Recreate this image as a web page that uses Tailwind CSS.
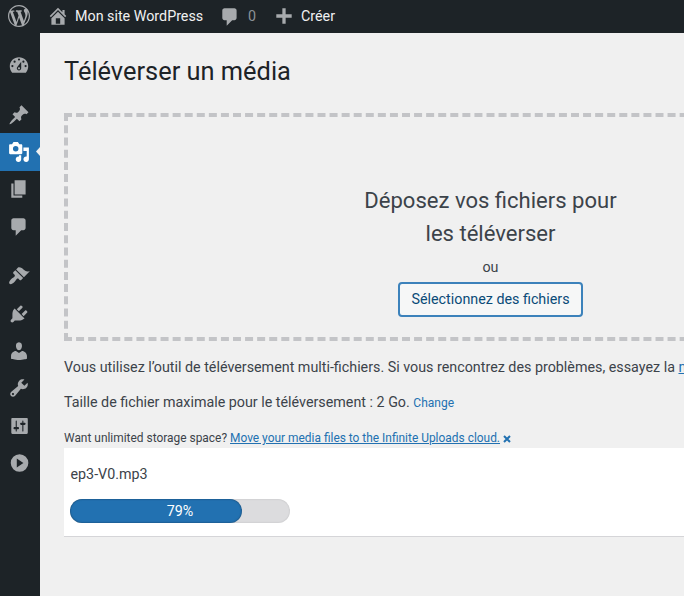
<!DOCTYPE html>
<html lang="fr">
<head>
<meta charset="utf-8">
<title>Téléverser un média</title>
<script src="https://cdn.jsdelivr.net/npm/@tailwindcss/browser@4"></script>
</head>
<body class="w-[684px] h-[596px] overflow-hidden bg-[#f0f0f0] font-[Roboto,sans-serif] text-[14.3px] text-[#3c434a]">
<header class="flex h-[33px] items-center bg-[#1d2327] text-[#f0f0f1] text-[14.3px] leading-[33px]">
  <svg class="ml-[7.500px] mb-[1px] size-[22px] shrink-0 fill-[#a7aaad]" viewBox="0 0 20 20"><path d="M20 10c0-5.51-4.49-10-10-10C4.48 0 0 4.49 0 10c0 5.52 4.48 10 10 10 5.51 0 10-4.48 10-10zM7.78 15.37L4.37 6.22c.55-.02 1.17-.08 1.17-.08.5-.06.44-1.13-.06-1.11 0 0-1.45.11-2.37.11-.18 0-.37 0-.58-.01C4.12 2.69 6.87 1.11 10 1.11c2.33 0 4.45.87 6.05 2.34-.68-.11-1.65.39-1.65 1.58 0 .74.45 1.36.9 2.1.35.61.55 1.36.55 2.46 0 1.49-1.4 5-1.4 5l-3.03-8.37c.54-.02.82-.17.82-.17.5-.05.44-1.25-.06-1.22 0 0-1.44.12-2.38.12-.87 0-2.33-.12-2.33-.12-.5-.03-.56 1.2-.06 1.22l.92.08 1.26 3.41zM17.41 10c.24-.64.74-1.87.43-4.25.7 1.29 1.05 2.71 1.05 4.25 0 3.29-1.73 6.24-4.4 7.78.97-2.59 1.94-5.2 2.92-7.78zM6.1 18.09C3.12 16.65 1.11 13.53 1.11 10c0-1.3.23-2.48.72-3.59C3.25 10.3 4.67 14.2 6.1 18.09zm4.03-6.63l2.58 6.98c-.86.29-1.76.45-2.71.45-.79 0-1.57-.11-2.29-.33.81-2.38 1.62-4.74 2.42-7.1z"/></svg>
  <svg class="ml-[17px] mb-[1px] size-[22px] shrink-0 fill-[#a7aaad]" viewBox="0 0 20 20"><path fill-rule="evenodd" d="M16 8.5l1.53 1.53-1.06 1.06L10 4.6l-6.47 6.5-1.06-1.07L10 2.5l4 4v-2h2v4zm-6-2.46l6 5.99V18H4v-5.97zM12 17v-5H8v5h4z"/></svg>
  <span class="ml-[6.500px] w-[128px] whitespace-nowrap">Mon site WordPress</span>
  <svg class="mt-[1px] ml-[16px] size-[22px] shrink-0 fill-[#a7aaad]" viewBox="0 0 20 20"><path d="M5 2h9c1.1 0 2 .9 2 2v7c0 1.1-.9 2-2 2h-2l-5 5v-5H5c-1.1 0-2-.9-2-2V4c0-1.1.9-2 2-2z"/></svg>
  <span class="ml-[7px] w-[9px] text-[#8c9196]">0</span>
  <svg class="ml-[16px] mb-[1px] size-[22px] shrink-0 fill-[#a7aaad]" viewBox="0 0 20 20"><path d="M17 8.5v3h-5.5V17h-3v-5.500H3v-3h5.500V3h3v5.500z"/></svg>
  <span class="ml-[6px]">Créer</span>
</header>
<div class="flex h-[563px]">
  <nav class="flex w-[40px] shrink-0 flex-col bg-[#1d2327] pt-[13px] fill-[#a7aaad]">
    <div class="flex h-[37.300px] items-center pl-[7.500px]"><svg class="size-[22px]" viewBox="0 0 20 20"><path fill-rule="evenodd" d="M3.760 17h12.480c1.340-1.570 2.140-3.610 2.140-5.840C18.380 6.540 14.630 3 10 3s-8.380 3.540-8.380 8.160c0 2.230.8 4.270 2.140 5.840zM10 4a1 1 0 1 1 0 2 1 1 0 0 1 0-2zM6 6a1 1 0 1 1 0 2 1 1 0 0 1 0-2zm8 0a1 1 0 1 1 0 2 1 1 0 0 1 0-2zm-5.370 5.550L12 7v6c0 1.100-.9 2-2 2s-2-.9-2-2c0-.57.24-1.080.63-1.450zM4 10a1 1 0 1 1 0 2 1 1 0 0 1 0-2zm12 0a1 1 0 1 1 0 2 1 1 0 0 1 0-2zm-5 3a1 1 0 1 0-2 0 1 1 0 0 0 2 0z"/></svg></div>
    <div class="mt-[12.500px] flex h-[37.300px] items-center pl-[7.500px]"><svg class="mt-[1px] size-[22px]" viewBox="0 0 20 20"><path d="M10.440 3.020l1.820-1.820 6.360 6.350-1.830 1.820c-1.050-.68-2.480-.57-3.410.36l-.75.75c-.92.93-1.040 2.350-.35 3.410l-1.830 1.820-2.410-2.410-2.800 2.790c-.42.42-3.380 2.710-3.800 2.290s1.860-3.390 2.280-3.810l2.790-2.790L4.100 9.360l1.830-1.820c1.050.69 2.480.57 3.400-.36l.75-.75c.93-.92 1.050-2.350.36-3.410z"/></svg></div>
    <div class="relative flex h-[37.600px] items-center bg-[#2271b1] fill-white pl-[7.500px]"><svg class="size-[22px]" viewBox="0 0 20 20"><path fill-rule="evenodd" d="M13 11V4c0-.55-.45-1-1-1h-1.670L9 1H5L3.670 3H2c-.55 0-1 .45-1 1v7c0 .55.45 1 1 1h10c.55 0 1-.45 1-1zM7 4.500a2.500 2.500 0 1 1 0 5 2.500 2.500 0 0 1 0-5zM14 6h5v10.500c0 1.380-1.120 2.500-2.500 2.500S14 17.880 14 16.500s1.120-2.500 2.500-2.500c.17 0 .34.02.5.05V9h-3V6zm-4 8.050V13h2v3.500c0 1.380-1.120 2.500-2.500 2.500S7 17.880 7 16.500 8.120 14 9.500 14c.17 0 .34.02.5.05z"/></svg>
      <svg class="absolute right-0 top-[14px] h-[9px] w-[4px] fill-[#f0f0f0]" viewBox="0 0 4 9"><path d="M4 0v9L0 4.500z"/></svg></div>
    <div class="flex h-[37.400px] items-center pl-[7.500px]"><svg class="size-[22px]" viewBox="0 0 20 20"><path d="M6 15V2h10v13H6zm-1 1h8v2H3V5h2v11z"/></svg></div>
    <div class="flex h-[37.400px] items-center pl-[7.500px]"><svg class="size-[22px]" viewBox="0 0 20 20"><path d="M5 2h9c1.100 0 2 .9 2 2v7c0 1.100-.9 2-2 2h-2l-5 5v-5H5c-1.100 0-2-.9-2-2V4c0-1.100.9-2 2-2z"/></svg></div>
    <div class="mt-[12px] flex h-[37.400px] items-center pl-[7.500px]"><svg class="size-[22px]" viewBox="0 0 20 20"><path d="M14.480 11.060L7.410 3.990l1.500-1.500c.5-.56 2.300-.47 3.510.32 1.210.8 1.430 1.280 2.910 2.100 1.180.64 2.450 1.260 4.450.85zm-.71.71L6.700 4.700 4.930 6.470c-.39.39-.39 1.020 0 1.410l1.060 1.060c.39.39.39 1.030 0 1.420-.6.6-1.430 1.110-2.210 1.690-.35.26-.7.53-1.010.84C1.430 14.230.4 16.080 1.400 17.070c.99 1 2.840-.03 4.180-1.360.31-.31.58-.66.85-1.020.57-.78 1.080-1.610 1.690-2.210.39-.39 1.020-.39 1.410 0l1.060 1.060c.39.39 1.020.39 1.410 0z"/></svg></div>
    <div class="flex h-[37.400px] items-center pl-[7.500px]"><svg class="size-[22px]" viewBox="0 0 20 20"><path d="M13.110 4.360L9.870 7.600 8 5.730l3.240-3.240c.35-.34 1.050-.2 1.560.32.52.51.66 1.210.31 1.550zm-8 1.770l.91-1.120 9.010 9.010-1.190.84c-.71.71-2.630 1.160-3.820 1.160H6.140L4.900 17.260c-.59.59-1.540.59-2.120 0-.59-.58-.59-1.530 0-2.120l1.240-1.240v-3.880c0-1.130.4-3.190 1.090-3.890zm7.260 3.970l3.240-3.240c.34-.35 1.040-.21 1.550.31.52.51.66 1.210.31 1.550l-3.240 3.250z"/></svg></div>
    <div class="flex h-[37.400px] items-center pl-[7.500px]"><svg class="size-[22px]" viewBox="0 0 20 20"><path d="M10 9.250c-2.270 0-2.730-3.440-2.730-3.440C7 4.020 7.820 2 9.970 2c2.160 0 2.980 2.020 2.710 3.810 0 0-.41 3.440-2.680 3.440zm0 2.570L12.720 10c2.390 0 4.520 2.330 4.520 4.530v2.490s-3.650 1.130-7.240 1.130c-3.650 0-7.240-1.130-7.240-1.130v-2.490c0-2.250 1.940-4.480 4.470-4.480z"/></svg></div>
    <div class="flex h-[37.400px] items-center pl-[7.500px]"><svg class="size-[22px]" viewBox="0 0 20 20"><path fill-rule="evenodd" d="M16.680 9.770c-1.340 1.340-3.300 1.670-4.950.99l-5.410 6.520c-.99.99-2.590.99-3.580 0s-.99-2.590 0-3.570l6.520-5.420c-.68-1.650-.35-3.610.99-4.950 1.280-1.280 3.120-1.620 4.720-1.060l-2.890 2.890 2.820 2.820 2.860-2.870c.53 1.580.18 3.390-1.080 4.650zM3.810 16.210c.4.39 1.040.39 1.430 0 .4-.4.4-1.040 0-1.430-.39-.4-1.030-.4-1.430 0-.39.39-.39 1.030 0 1.430z"/></svg></div>
    <div class="flex h-[37.400px] items-center pl-[7.500px]"><svg class="size-[22px]" viewBox="0 0 20 20"><path fill-rule="evenodd" d="M18 16V4c0-.8-.3-1.200-1-1.200H4c-.7 0-1 .4-1 1.200v12c0 .8.3 1.200 1 1.200h13c.7 0 1-.4 1-1.200zM8 11h1c.55 0 1 .45 1 1s-.45 1-1 1H8v1.500c0 .28-.22.5-.5.5s-.5-.22-.5-.5V13H6c-.55 0-1-.45-1-1s.45-1 1-1h1V5.500c0-.28.22-.5.5-.5s.5.22.5.5V11zm5-2h-1c-.55 0-1-.45-1-1s.45-1 1-1h1V5.500c0-.28.22-.5.5-.5s.5.22.5.5V7h1c.55 0 1 .45 1 1s-.45 1-1 1h-1v5.500c0 .28-.22.5-.5.5s-.5-.22-.5-.5V9z"/></svg></div>
    <div class="flex h-[37.400px] items-center pl-[7.500px]"><svg class="size-[22px]" viewBox="0 0 20 20"><path fill-rule="evenodd" d="M10.500 2a8 8 0 1 1 0 16 8 8 0 0 1 0-16zM8 6v8l6-4z"/></svg></div>
  </nav>
  <main class="w-[644px] shrink-0 overflow-hidden pl-[24px] pt-[22px]">
    <h1 class="h-[58px] text-[25.400px] leading-[32px] text-[#1d2327]">Téléverser un média</h1>
    <section class="flex h-[228px] w-[853px] flex-col items-center border-4 border-dashed border-[#c3c4c7] pt-[67px]">
      <p class="w-[275px] text-center text-[22.050px] leading-[33px]">Déposez vos fichiers pour les téléverser</p>
      <p class="mt-[6px] leading-[23px]">ou</p>
      <button class="mt-[3px] h-[35px] w-[185px] whitespace-nowrap rounded-[4px] border-2 border-[#3c82bb] bg-[#f6f7f7] pt-[1px] text-[14.300px] text-[#0a4b78]">Sélectionnez des fichiers</button>
    </section>
    <p class="mt-[15px] leading-[22px] whitespace-nowrap">Vous utilisez l’outil de téléversement multi-fichiers. Si vous rencontrez des problèmes, essayez la <a class="text-[#2271b1] underline">m</a></p>
    <p class="mt-[13px] leading-[22px]">Taille de fichier maximale pour le téléversement&nbsp;: 2 Go. <a class="text-[12px] text-[#2271b1]">Change</a></p>
    <p class="mt-[15px] flex h-[19px] items-center text-[11.930px] leading-[19px]">Want unlimited storage space?&nbsp;<a class="text-[#2271b1] underline">Move your media files to the Infinite Uploads cloud.</a>
      <svg class="ml-[3px] mt-[1px] size-[8px] stroke-[#2271b1] stroke-2" viewBox="0 0 8 8"><path d="M1 1l6 6M7 1L1 7"/></svg></p>
    <div class="h-[89px] border-b border-[#d5d5d8] bg-white pl-[6px] pt-[15px]">
      <div class="pl-[0.500px] leading-[22px]">ep3-V0.mp3</div>
      <div class="mt-[14px] h-[24px] w-[220px] rounded-full bg-[#dcdcde] shadow-[inset_0_0_2px_rgba(0,0,0,0.15)]">
        <div class="h-full rounded-full bg-[#2271b1] text-white leading-[24px] shadow-[inset_0_0_2px_rgba(0,0,0,0.5)]" style="width:172px"><span class="block w-[220px] text-center">79%</span></div>
      </div>
    </div>
  </main>
</div>
</body>
</html>
